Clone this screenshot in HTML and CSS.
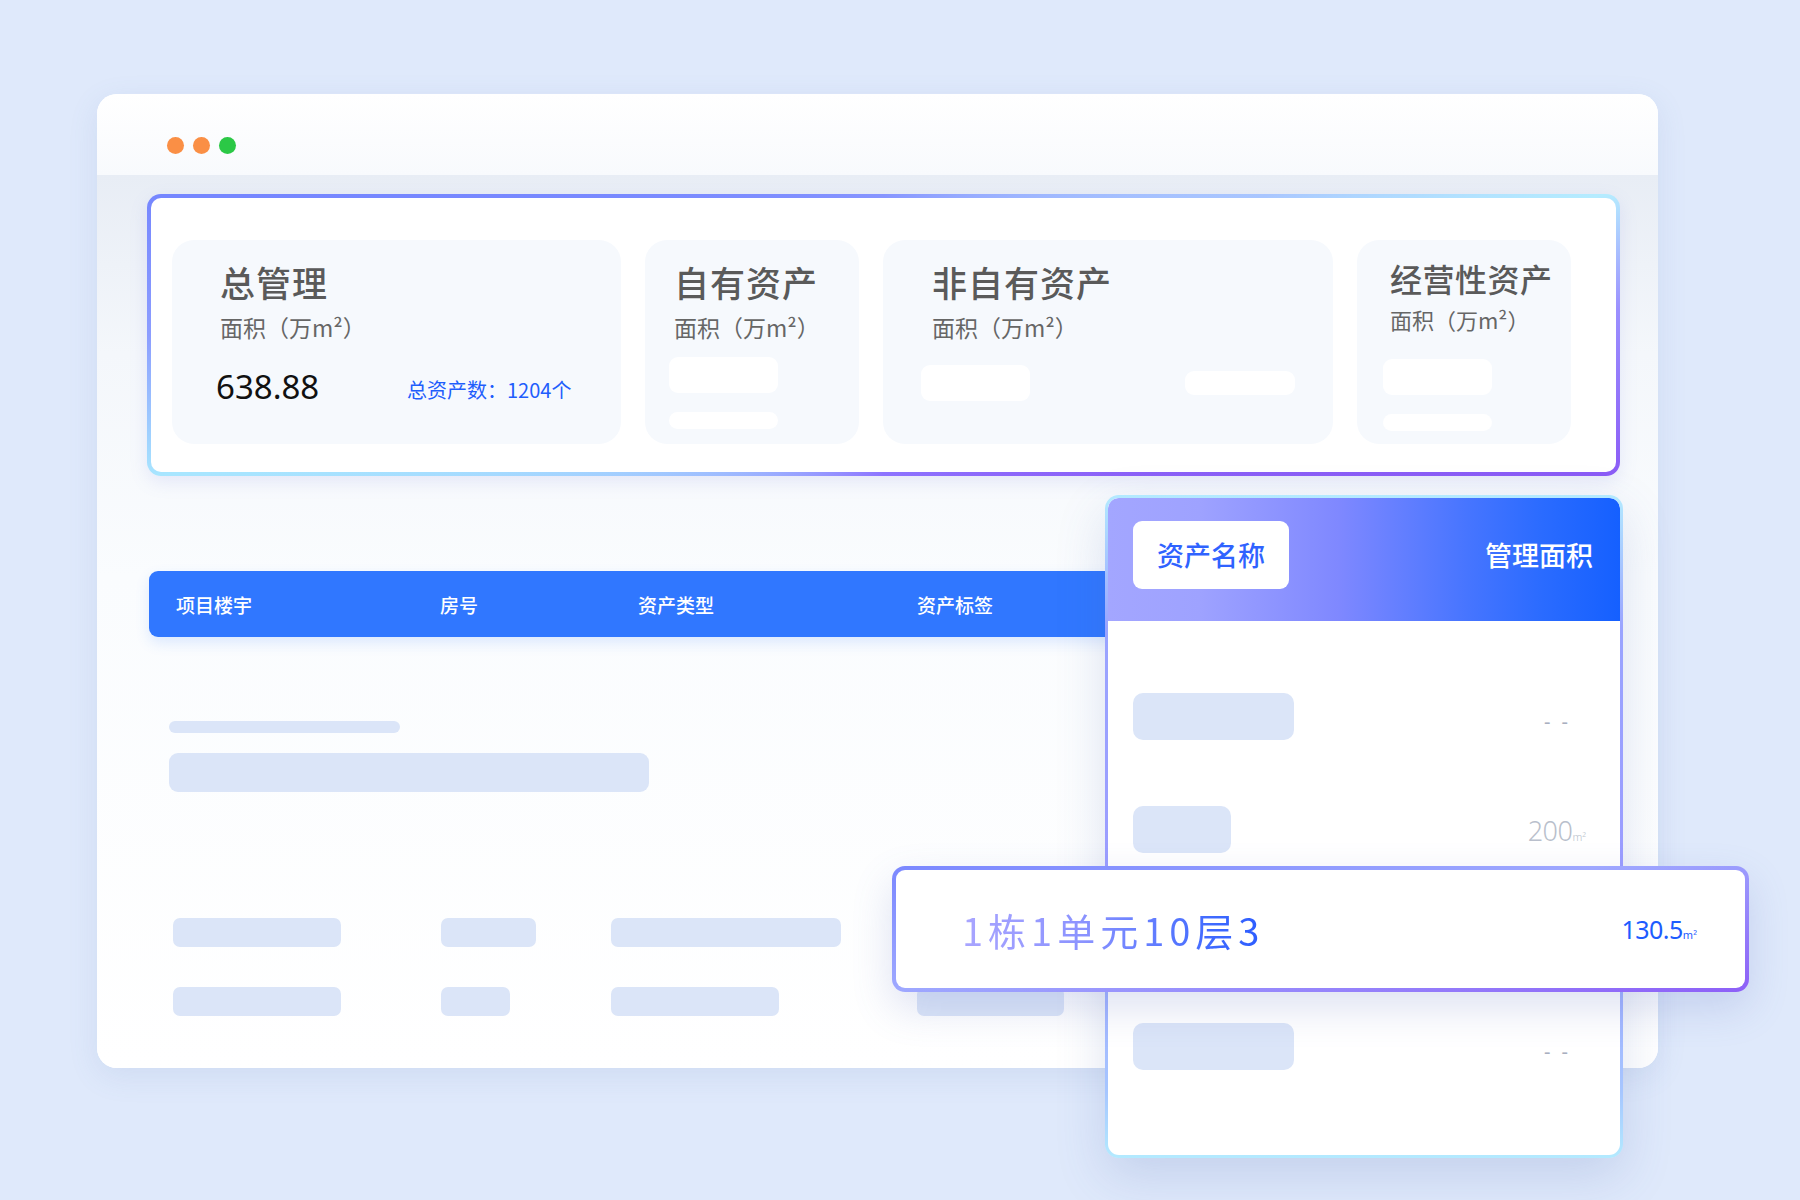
FILE: index.html
```html
<!DOCTYPE html>
<html lang="zh">
<head>
  <meta charset="UTF-8" />
  <title>资产管理</title>
  <link rel="stylesheet" href="styles.css">
</head>
<body>

  <div class="ventana">
    <div class="barra">
      <span class="punto naranja"></span>
      <span class="punto naranja"></span>
      <span class="punto verde"></span>
    </div>

    <div class="contenido">
      <div class="resumen">
        <div class="tarjeta t-total">
          <div class="titulo">总管理</div>
          <div class="sub">面积（万m²）</div>
          <div class="fila-valor">
            <span class="valor">638.88</span>
            <span class="cuenta">总资产数：1204个</span>
          </div>
        </div>

        <div class="tarjeta t-propio">
          <div class="titulo">自有资产</div>
          <div class="sub">面积（万m²）</div>
          <div class="hueco grande"></div>
          <div class="hueco fino"></div>
        </div>

        <div class="tarjeta t-ajeno">
          <div class="titulo">非自有资产</div>
          <div class="sub">面积（万m²）</div>
          <div class="par">
            <div class="hueco grande"></div>
            <div class="hueco medio"></div>
          </div>
        </div>

        <div class="tarjeta t-opera">
          <div class="titulo">经营性资产</div>
          <div class="sub">面积（万m²）</div>
          <div class="hueco grande"></div>
          <div class="hueco fino"></div>
        </div>
      </div>

      <div class="tabla">
        <div class="cabecera">
          <span class="col c1">项目楼宇</span>
          <span class="col c2">房号</span>
          <span class="col c3">资产类型</span>
          <span class="col c4">资产标签</span>
        </div>

        <div class="barra-fina"></div>
        <div class="barra-ancha"></div>

        <div class="fila primera">
          <span class="col c1"><i class="trozo" style="width:168px"></i></span>
          <span class="col c2"><i class="trozo" style="width:95px"></i></span>
          <span class="col c3"><i class="trozo" style="width:230px"></i></span>
          <span class="col c4"><i class="trozo" style="width:147px"></i></span>
        </div>
        <div class="fila">
          <span class="col c1"><i class="trozo" style="width:168px"></i></span>
          <span class="col c2"><i class="trozo" style="width:69px"></i></span>
          <span class="col c3"><i class="trozo" style="width:168px"></i></span>
          <span class="col c4"><i class="trozo" style="width:147px"></i></span>
        </div>
      </div>
    </div>
  </div>

  <!-- tarjeta flotante de la derecha -->
  <div class="detalle">
    <div class="detalle-cab">
      <span class="etiqueta">资产名称</span>
      <span class="cab-der">管理面积</span>
    </div>
    <div class="detalle-fila f1">
      <i class="trozo" style="width:161px"></i>
      <span class="dato">- -</span>
    </div>
    <div class="detalle-fila f2">
      <i class="trozo" style="width:98px"></i>
      <span class="dato num">200<small>m²</small></span>
    </div>
    <div class="detalle-fila f3">
      <i class="trozo" style="width:161px"></i>
      <span class="dato">- -</span>
    </div>
    <div class="detalle-fila f4">
      <i class="trozo" style="width:161px"></i>
      <span class="dato">- -</span>
    </div>
  </div>

  <div class="resaltado">
    <span class="nombre">1栋1单元10层3</span>
    <span class="area">130.5<small>m²</small></span>
  </div>

</body>
</html>
```

FILE: styles.css
```css
body {
  margin: 0;
  width: 1800px;
  height: 1200px;
  overflow: hidden;
  position: relative;
  background-color: #dfe9fb;
  font-family: "Noto Sans", "Noto Sans CJK SC", sans-serif;
}

.ventana {
  position: relative;
  z-index: 1;
  margin: 94px 0 0 97px;
  width: 1561px;
  height: 974px;
  background: #fff;
  border-radius: 20px;
  box-shadow: 0 8px 30px rgba(90, 120, 180, 0.12);
  overflow: hidden;
  display: flex;
  flex-direction: column;
}

.barra {
  height: 81px;
  box-sizing: border-box;
  flex-shrink: 0;
  display: flex;
  align-items: flex-start;
  gap: 9px;
  padding: 43px 0 0 70px;
  background: linear-gradient(#ffffff, #f8fafd);
}

.punto {
  width: 17px;
  height: 17px;
  border-radius: 50%;
}
.naranja { background: #fa8f45; }
.verde { background: #2bc846; }

.contenido {
  flex: 1;
  padding: 19px 38px 0 50px;
  background: linear-gradient(#e8edf5 0%, #f4f7fb 20%, #fafcfe 45%, #ffffff 100%);
}

/* panel superior */
.resumen {
  box-sizing: border-box;
  height: 282px;
  border: 4px solid transparent;
  border-radius: 14px;
  background:
    linear-gradient(#fff, #fff) padding-box,
    conic-gradient(from 0deg, #8795ff 0deg, #a9c6ff 70deg, #b5ecff 79deg, #9b90ff 88deg, #8b5cf6 101deg, #8d74ff 180deg, #a8e6ff 259deg, #8c9dff 270deg, #7586ff 281deg, #8795ff 360deg) border-box;
  display: flex;
  gap: 24px;
  padding: 42px 42px 0 21px;
  box-shadow: 0 6px 18px rgba(120, 130, 220, 0.15);
}

.tarjeta {
  box-sizing: border-box;
  height: 204px;
  background: #f6f9fd;
  border-radius: 22px;
  padding-top: 22px;
}
.t-total { width: 449px; padding-left: 48px; }
.t-propio { width: 214px; padding-left: 29px; }
.t-ajeno { width: 450px; padding-left: 49px; }
.t-opera { width: 214px; padding-left: 33px; padding-top: 18px; }

.titulo {
  font-size: 35px;
  line-height: 40px;
  font-weight: 500;
  color: #5a5a5a;
  letter-spacing: 1px;
  white-space: nowrap;
  font-family: "Noto Sans CJK SC", sans-serif;
}
.t-opera .titulo { font-size: 32px; letter-spacing: 0.5px; }

.sub {
  margin-top: 10px;
  font-size: 23px;
  line-height: 30px;
  color: #666;
  white-space: nowrap;
  font-family: "Noto Sans CJK SC", sans-serif;
}
.t-opera .sub { margin-top: 6px; font-size: 22px; }

.fila-valor {
  margin-top: 24px;
  margin-left: -4px;
  display: flex;
  align-items: center;
  height: 40px;
}

.valor {
  width: 191px;
  font-size: 33px;
  color: #111;
}

.cuenta {
  font-size: 20px;
  color: #1f5efc;
  padding-top: 6px;
  font-family: "Noto Sans CJK SC", sans-serif;
}

.hueco {
  background: #fff;
  border-radius: 9px;
  margin-left: -5px;
}
.hueco.grande { width: 109px; height: 36px; margin-top: 15px; }
.hueco.fino { width: 109px; height: 17px; margin-top: 19px; }
.t-opera .hueco { margin-left: -7px; }
.t-opera .hueco.grande { margin-top: 25px; }

.par {
  display: flex;
  align-items: flex-start;
  margin-left: -11px;
}
.par .hueco { margin-left: 0; }
.par .hueco.grande { margin-top: 23px; }
.par .hueco.medio {
  width: 110px;
  height: 24px;
  margin: 29px 0 0 155px;
}

/* tabla de abajo */
.tabla {
  margin: 95px 0 0 2px;
}

.cabecera {
  width: 1000px;
  height: 66px;
  background: #3077ff;
  border-radius: 9px 0 0 9px;
  display: flex;
  align-items: center;
  box-shadow: 0 6px 14px rgba(48, 119, 255, 0.15);
}

.col {
  box-sizing: border-box;
  flex-shrink: 0;
  display: block;
}

.cabecera .col {
  color: #fff;
  font-size: 19px;
  font-weight: 500;
  font-family: "Noto Sans CJK SC", sans-serif;
}
.cabecera .c1 { width: 291px; padding-left: 27px; }
.cabecera .c2 { width: 198px; }
.cabecera .c3 { width: 279px; }
.cabecera .c4 { width: 200px; }

.barra-fina {
  margin: 84px 0 0 20px;
  width: 231px;
  height: 12px;
  border-radius: 6px;
  background: #dbe5f8;
}

.barra-ancha {
  margin: 20px 0 0 20px;
  width: 480px;
  height: 39px;
  border-radius: 9px;
  background: #dbe5f8;
}

.fila {
  display: flex;
  margin-top: 40px;
}
.fila.primera { margin-top: 126px; }
.fila .c1 { padding-left: 24px; width: 292px; }
.fila .c2 { width: 170px; }
.fila .c3 { width: 306px; }
.fila .c4 { width: 200px; }

.trozo {
  display: block;
  height: 29px;
  border-radius: 7px;
  background: #dbe5f8;
}

/* tarjeta flotante */
.detalle {
  position: absolute;
  z-index: 2;
  left: 1105px;
  top: 495px;
  width: 518px;
  height: 663px;
  box-sizing: border-box;
  border: 3px solid transparent;
  border-radius: 14px;
  background:
    linear-gradient(#fff, #fff) padding-box,
    linear-gradient(#b3eaff 0%, #9aa4ff 20%, #9b9cff 60%, #a6c6ff 90%, #b3eaff 100%) border-box;
  box-shadow: 0 18px 50px rgba(70, 100, 170, 0.18);
  overflow: hidden;
}

.detalle-cab {
  height: 123px;
  border-radius: 10px 10px 0 0;
  background: linear-gradient(90deg, #a3a6ff 0%, #9ea2ff 18%, #7f88ff 45%, #4775ff 70%, #2a6bff 85%, #1560ff 100%);
  display: flex;
  align-items: center;
  justify-content: space-between;
  padding: 0 27px 0 25px;
}

.etiqueta {
  background: #fff;
  border-radius: 9px;
  width: 156px;
  height: 68px;
  display: flex;
  align-items: center;
  justify-content: center;
  font-size: 27px;
  font-weight: 500;
  color: #2f63ff;
  font-family: "Noto Sans CJK SC", sans-serif;
  margin-top: -10px;
}

.cab-der {
  font-size: 27px;
  font-weight: 500;
  color: #fff;
  font-family: "Noto Sans CJK SC", sans-serif;
  margin-top: -10px;
}

.detalle-fila {
  display: flex;
  align-items: center;
  justify-content: space-between;
  padding: 0 36px 0 25px;
  height: 47px;
}
.detalle-fila .trozo { height: 100%; border-radius: 10px; }
.f1 { margin-top: 72px; }
.f2 { margin-top: 66px; }
.f3 { margin-top: 66px; }
.f4 { margin-top: 57px; }

.dato {
  color: #a9afbf;
  font-size: 20px;
  letter-spacing: 3px;
  margin-right: 13px;
  padding-top: 10px;
}
.dato.num {
  color: #b9bfcc;
  font-size: 27px;
  letter-spacing: -0.5px;
  font-weight: 300;
  margin-right: -2px;
  padding-top: 2px;
}
.dato small, .area small {
  font-size: 11px;
  letter-spacing: 0;
}

.resaltado {
  position: absolute;
  z-index: 3;
  left: 892px;
  top: 866px;
  width: 857px;
  height: 126px;
  box-sizing: border-box;
  border: 4px solid transparent;
  border-radius: 13px;
  background:
    linear-gradient(#fff, #fff) padding-box,
    linear-gradient(170deg, #7b88ff 0%, #9ea8ff 45%, #8d5ff7 100%) border-box;
  box-shadow: 0 16px 40px rgba(90, 110, 190, 0.2);
  display: flex;
  align-items: center;
  justify-content: space-between;
  padding: 0 48px 0 66px;
}

.nombre {
  font-size: 38px;
  letter-spacing: 5px;
  font-family: "Noto Sans CJK SC", sans-serif;
  background: linear-gradient(90deg, #a9a5ff 0%, #8b93ff 40%, #3c68ff 85%, #2c5cff 100%);
  -webkit-background-clip: text;
  background-clip: text;
  color: transparent;
}

.area {
  font-size: 25px;
  color: #1d5cff;
  letter-spacing: -0.5px;
}
```
